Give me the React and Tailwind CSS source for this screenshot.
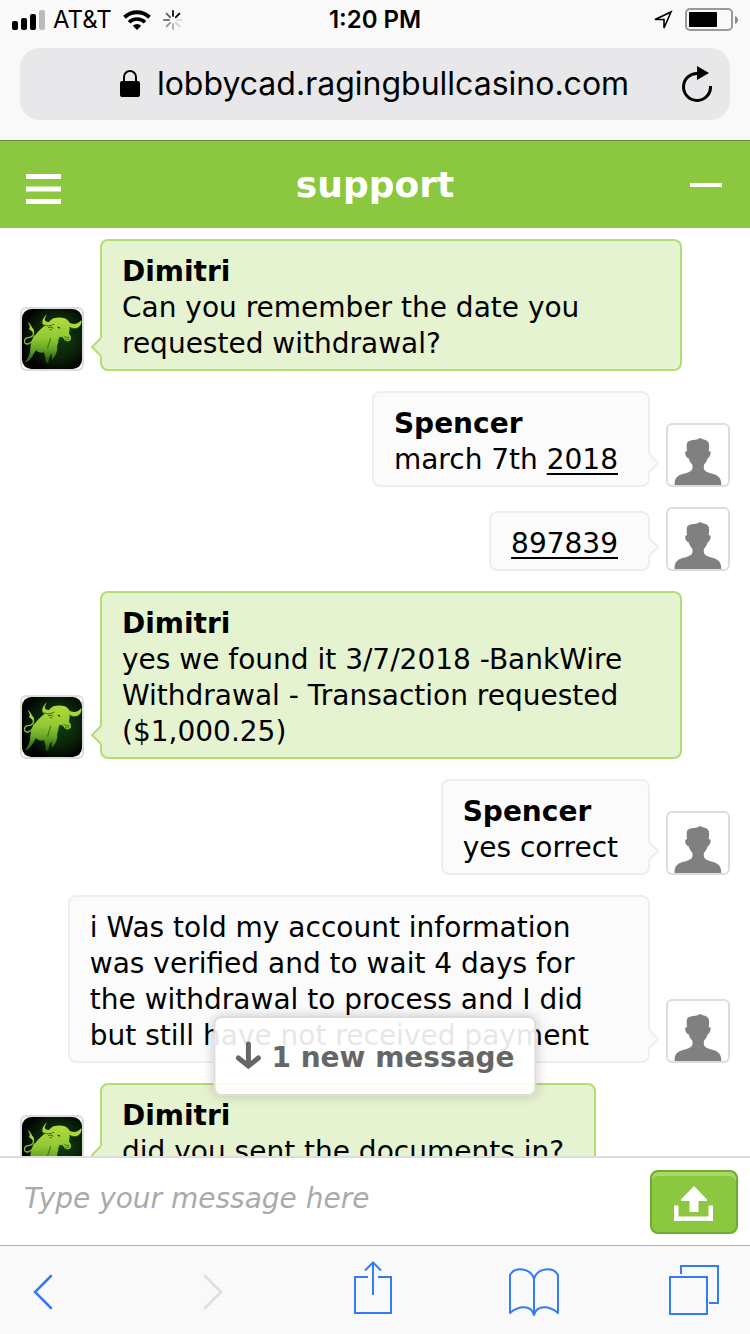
const messages = [
    {
        id: 1,
        from: "agent",
        name: "Dimitri",
        body: "Can you remember the date you requested withdrawal?",
    },
    { id: 2, from: "visitor", name: "Spencer", body: "march 7th ", link: "2018" },
    { id: 3, from: "visitor", link: "897839" },
    {
        id: 4,
        from: "agent",
        name: "Dimitri",
        body: "yes we found it 3/7/2018 -BankWire Withdrawal - Transaction requested ($1,000.25)",
    },
    { id: 5, from: "visitor", name: "Spencer", body: "yes correct" },
    {
        id: 6,
        from: "visitor",
        body: "i Was told my account information was verified and to wait 4 days for the withdrawal to process and I did but still have not received payment",
    },
    { id: 7, from: "agent", name: "Dimitri", body: "did you sent the documents in?" },
];

function SignalIcon() {
    return (
        <svg width="34" height="20" viewBox="0 0 34 20" aria-hidden="true">
            <rect x="0" y="11" width="6" height="9" rx="2" />
            <rect x="9" y="8" width="6" height="12" rx="2" />
            <rect x="18" y="4" width="6" height="16" rx="2" />
            <rect x="27" y="0" width="6" height="20" rx="2" fill="#bbb" />
        </svg>
    );
}

function WifiIcon() {
    return (
        <svg width="28" height="20" viewBox="0 0 28 20" fill="none" stroke="#000" aria-hidden="true">
            <path d="M1.5 7.2a18 18 0 0 1 25 0" strokeWidth="4" />
            <path d="M6 12.3a11.5 11.5 0 0 1 16 0" strokeWidth="3.6" />
            <path d="M14 20l-4.2-4.2a6 6 0 0 1 8.4 0z" fill="#000" stroke="none" />
        </svg>
    );
}

function SpinnerIcon() {
    return (
        <svg width="20" height="20" viewBox="0 0 20 20" strokeWidth="2" strokeLinecap="round" aria-hidden="true">
            <path d="M10 1v5" stroke="#222" />
            <path d="M16.4 3.6l-3.5 3.5" stroke="#000" />
            <path d="M19 10h-5" stroke="#e2e2e2" />
            <path d="M16.4 16.4l-3.5-3.5" stroke="#d0d0d0" />
            <path d="M10 19v-5" stroke="#b5b5b5" />
            <path d="M3.6 16.4l3.5-3.5" stroke="#999" />
            <path d="M1 10h5" stroke="#777" />
            <path d="M3.6 3.6l3.5 3.5" stroke="#666" />
        </svg>
    );
}

function BatteryIcon() {
    return (
        <svg width="53" height="24" viewBox="0 0 53 24" aria-hidden="true">
            <rect x="1" y="1" width="46" height="21" rx="4" fill="none" stroke="#999" strokeWidth="2" />
            <rect x="4" y="4" width="28" height="15" rx="1" />
            <path d="M50 8c4 1.5 4 6.5 0 8z" fill="#888" />
        </svg>
    );
}

function BullAvatar() {
    return (
        <div className="size-16 shrink-0 rounded-md border-2 border-[#ddd] bg-white">
            <svg className="block size-full" viewBox="6 6 180 180" role="img" aria-label="Dimitri">
                <defs>
                    <radialGradient id="night" cx="0.6" cy="0.45" r="0.6">
                        <stop offset="0" stopColor="#123f10" />
                        <stop offset="0.6" stopColor="#0a240a" />
                        <stop offset="1" stopColor="#010301" />
                    </radialGradient>
                    <linearGradient id="hide" gradientUnits="userSpaceOnUse" x1="0" y1="30" x2="0" y2="168">
                        <stop offset="0" stopColor="#b2da3c" />
                        <stop offset="0.45" stopColor="#93c933" />
                        <stop offset="0.7" stopColor="#65a426" />
                        <stop offset="1" stopColor="#1c4a10" />
                    </linearGradient>
                </defs>
                <rect x="6" y="6" width="180" height="180" rx="28" fill="url(#night)" />
                <path
                    d="M39 70c6 14-4 22-15 22-12 1-15 18-3 19 10 1 16-8 25-19"
                    fill="none"
                    stroke="#83bb2e"
                    strokeWidth="4"
                />
                <path d="M22 46c12 4 11 14 18 20 3 3 2 8-1 13-3-7-7-9-12-13 4-4 3-12-5-20z" fill="#a5d238" />
                <path
                    d="M46 84C55 72 66 62 78 54c8-6 12-14 22-20 10-3 22-4 32-1 8 2 13 7 16 14 2 7 0 12 1 18l-2 15c3 3 8 9 6 17-3 7-14 8-19 3l-5-8-10-3c-4 8-3 13-5 20-3 7-3 12-2 16-2 14-7 24-17 34 1-8 0-14-1-20l-4 8c-4 8-5 16-4 22l-9-3c1-12-2-20-5-30-10 3-18 0-24-7-5 9-9 17-16 26-5 7-11 11-19 12 9-11 15-20 17-32 1-18 3-32 11-48z"
                    fill="url(#hide)"
                />
                <path
                    d="M80 21c-2 9-8 14-4 20 5 6 16 3 27 4l-3 11c-12 4-27 4-32-5-4-10 4-20 12-30z"
                    fill="#a9d636"
                />
                <path d="M147 46c12 8 27 6 37-7 2 13-5 23-16 25-8 2-15-1-20-4z" fill="#a9d636" />
                <path
                    d="M71 52c8 7 21 5 32-1M150 61c10 6 23 6 31-5M84 62l9-2 7 4M89 67l7 2"
                    fill="none"
                    stroke="#20500f"
                    strokeWidth="2.5"
                />
                <path d="M112 59l7 1 2 5-7-2z" fill="#173a0c" />
                <path
                    d="M134 87c2 4 6 6 9 4 4-3 5 3 2 6-4 3-8 0-11-3M128 89c-5 5-10 5-13 11M92 93c-2 12-8 18-9 32"
                    fill="none"
                    stroke="#295e14"
                    strokeWidth="2.5"
                />
            </svg>
        </div>
    );
}

function VisitorAvatar() {
    return (
        <div className="size-16 shrink-0 rounded-md border-2 border-[#ddd] bg-white">
            <svg className="block size-full" viewBox="6 6 180 180" role="img" aria-label="Visitor">
                <path
                    d="M26 186c-1-18 6-28 24-33 14-4 24-7 28-13 2-5 2-10 1-15-5-5-9-11-11-19-7-1-12-12-10-19 1-3 4-2 5-2-1-10-2-19 1-27 4-6 14-7 25-8 4 0 9-4 15-5 2 1 3 3 7 4 11 2 17 7 18 14 1 7 0 14-1 22 3-1 6 0 6 3 0 7-4 17-9 18-2 8-6 14-11 19-1 6-1 11 1 15 4 6 14 10 27 13 17 5 24 15 24 33z"
                    fill="#808080"
                />
            </svg>
        </div>
    );
}

function Tail({ side }) {
    if (side === "agent") {
        return (
            <svg className="absolute bottom-2.5 -left-3 h-6 w-3" viewBox="0 0 12 24" aria-hidden="true">
                <path d="M12 2L2 12l10 10z" fill="#e6f3d0" />
                <path d="M11 3L2 12l9 9" fill="none" stroke="#b3dc74" strokeWidth="2" />
            </svg>
        );
    }
    return (
        <svg className="absolute -right-3 bottom-2.5 h-6 w-3" viewBox="0 0 12 24" aria-hidden="true">
            <path d="M0 2l10 10L0 22z" fill="#fbfbfb" />
            <path d="M1 3l9 9-9 9" fill="none" stroke="#eee" strokeWidth="2" />
        </svg>
    );
}

function Message({ from, name, body, link }) {
    const isAgent = from === "agent";
    return (
        <li className={isAgent ? "flex items-end gap-4" : "flex flex-row-reverse items-end gap-4"}>
            {isAgent ? <BullAvatar /> : <VisitorAvatar />}
            <div
                className={
                    isAgent
                        ? "relative max-w-[82%] rounded-lg border-2 border-[#b3dc74] bg-[#e6f3d0] pt-[13px] pr-[30px] pb-[7px] pl-5"
                        : "relative max-w-[82%] rounded-lg border-2 border-[#eee] bg-[#fbfbfb] pt-[13px] pr-[30px] pb-[7px] pl-5"
                }
            >
                {name && <p className="font-bold">{name}</p>}
                <p>
                    {body}
                    {link && (
                        <a href="#" className="underline underline-offset-4">
                            {link}
                        </a>
                    )}
                </p>
                <Tail side={from} />
            </div>
        </li>
    );
}

function BrowserTop() {
    return (
        <div className="shrink-0 border-b border-[#6b8f35] bg-[#f9f9f9] font-['Inter',sans-serif] text-black">
            <div className="grid h-10 grid-cols-3 items-center pr-3 pl-3">
                <div className="flex items-center gap-[7px]">
                    <SignalIcon />
                    <span className="text-[24px]">AT&amp;T</span>
                    <span className="flex items-center gap-3 pl-1">
                        <WifiIcon />
                        <SpinnerIcon />
                    </span>
                </div>
                <span className="text-center text-[24px] font-semibold">1:20 PM</span>
                <div className="flex items-center justify-end gap-3">
                    <svg width="20" height="20" viewBox="0 0 20 20" aria-hidden="true">
                        <path d="M2 9.500L18 2l-7 16V9.500z" fill="none" stroke="#000" strokeWidth="1.600" />
                    </svg>
                    <BatteryIcon />
                </div>
            </div>
            <div className="px-5 pt-2 pb-5">
                <div className="flex h-18 items-center rounded-[20px] bg-[#e8e8ea] pr-4">
                    <div className="flex flex-1 items-center justify-center gap-4 pl-12">
                        <svg width="22" height="28" viewBox="0 0 22 28" aria-hidden="true">
                            <rect x="1" y="11" width="20" height="16" rx="2" />
                            <path d="M5 12V7a6 6 0 0 1 12 0V12" fill="none" stroke="#000" strokeWidth="2" />
                        </svg>
                        <span className="text-[32px]">lobbycad.ragingbullcasino.com</span>
                    </div>
                    <button type="button" aria-label="Reload">
                        <svg width="34" height="38" viewBox="0 0 34 38" aria-hidden="true">
                            <path d="M18 8.500A13.500 13.500 0 1 0 30.500 21" fill="none" stroke="#000" strokeWidth="3" />
                            <path d="M17 1l12 7-12 7z" />
                        </svg>
                    </button>
                </div>
            </div>
        </div>
    );
}

function ChatHeader() {
    return (
        <header className="grid h-[87px] shrink-0 grid-cols-3 items-center bg-[#8bc83f] px-6 text-white">
            <button type="button" aria-label="Menu" className="pt-2">
                <svg width="38" height="30" viewBox="0 0 38 30" fill="currentColor" aria-hidden="true">
                    <path d="M2 0h35v5H2zM2 12.500h35v5H2zM2 25h35v5H2z" />
                </svg>
            </button>
            <h1 className="text-center text-[36px] font-bold">support</h1>
            <button type="button" aria-label="Minimize" className="flex justify-end pr-1">
                <svg width="32" height="4" fill="currentColor" aria-hidden="true">
                    <rect width="32" height="4" />
                </svg>
            </button>
        </header>
    );
}

function Composer() {
    return (
        <form className="flex h-[89px] shrink-0 items-center gap-4 border-t-2 border-[#ddd] bg-white pr-3 pl-6">
            <input
                type="text"
                aria-label="Message"
                placeholder="Type your message here"
                className="min-w-0 flex-1 pb-1.5 text-[28px] italic placeholder:text-[#aaa] focus:outline-none"
            />
            <button
                type="button"
                aria-label="Send file"
                className="flex h-16 w-22 items-center justify-center rounded-lg border-2 border-[#6dac2e] bg-[#8bc83f] shadow-[inset_0_4px_0_#a9d965]"
            >
                <svg className="mt-1" width="40" height="36" viewBox="0 0 40 36" fill="#fff" aria-hidden="true">
                    <path d="M20 0l13 13.500v1.500h-8.500v11h-9V15H7v-1.500z" />
                    <path d="M0 19.500h4.500V30.500h30V19.500H39V35H0z" />
                </svg>
            </button>
        </form>
    );
}

function BrowserToolbar() {
    return (
        <nav className="flex h-[89px] shrink-0 items-center justify-between border-t border-[#b2b2b2] bg-[#f9f9f9] pr-7 pl-8 text-[#347cf6]">
            <button type="button" aria-label="Back" className="w-12 pt-1">
                <svg width="22" height="38" viewBox="0 0 22 38" fill="none" stroke="currentColor" strokeWidth="2.500" strokeLinecap="round">
                    <path d="M19 3L3 19l16 16" />
                </svg>
            </button>
            <button type="button" aria-label="Forward" disabled className="flex w-14 justify-center pt-1 text-[#ddd]">
                <svg width="22" height="38" viewBox="0 0 22 38" fill="none" stroke="currentColor" strokeWidth="2.500" strokeLinecap="round">
                    <path d="M3 3l16 16L3 35" />
                </svg>
            </button>
            <button type="button" aria-label="Share" className="flex w-14 justify-center pb-1.5">
                <svg width="40" height="54" viewBox="0 0 40 54" fill="none" stroke="currentColor" strokeWidth="2">
                    <path d="M15 17H2v36h36V17H25M20 35V3M12 10.500L20 2.500l8 8" />
                </svg>
            </button>
            <button type="button" aria-label="Bookmarks" className="flex w-14 justify-center pt-1">
                <svg width="52" height="50" viewBox="0 0 52 50" fill="none" stroke="currentColor" strokeWidth="2">
                    <path
                        d="M26 48V12C23 1 7-1 2 8v38c8-7 21-9 24 2 3-11 16-9 24-2V8C45-1 29 1 26 12"
                        strokeLinejoin="round"
                    />
                </svg>
            </button>
            <button type="button" aria-label="Tabs" className="flex w-14 justify-center">
                <svg width="50" height="50" viewBox="0 0 50 50" fill="none" stroke="currentColor" strokeWidth="2">
                    <path d="M1 12h37v37H1zM12 9V1h37v37h-9" />
                </svg>
            </button>
        </nav>
    );
}

export default function App() {
    return (
        <div className="flex h-screen flex-col overflow-hidden bg-white font-['Verdana','DejaVu_Sans',sans-serif] text-[28px] leading-9 text-black">
            <BrowserTop />
            <ChatHeader />
            <main className="relative min-h-0 flex-1">
                <ul className="flex h-full flex-col gap-5 overflow-hidden px-5 pt-[11px]">
                    {messages.map((message) => (
                        <Message key={message.id} {...message} />
                    ))}
                </ul>
                <button
                    type="button"
                    className="absolute bottom-15 left-1/2 flex -translate-x-1/2 items-center gap-2.5 rounded-lg border-2 border-[#ddd] bg-white/90 px-5 pt-[22px] pb-[18px] font-bold whitespace-nowrap text-[#666] shadow-[0_0_12px_rgba(0,0,0,0.2)]"
                >
                    <svg className="mb-1.5" width="26" height="28" viewBox="0 0 26 28" fill="none" stroke="currentColor" strokeWidth="5" strokeLinecap="round">
                        <path d="M13 3v21M3 17l10 8 10-8" />
                    </svg>
                    1 new message
                </button>
            </main>
            <Composer />
            <BrowserToolbar />
        </div>
    );
}
